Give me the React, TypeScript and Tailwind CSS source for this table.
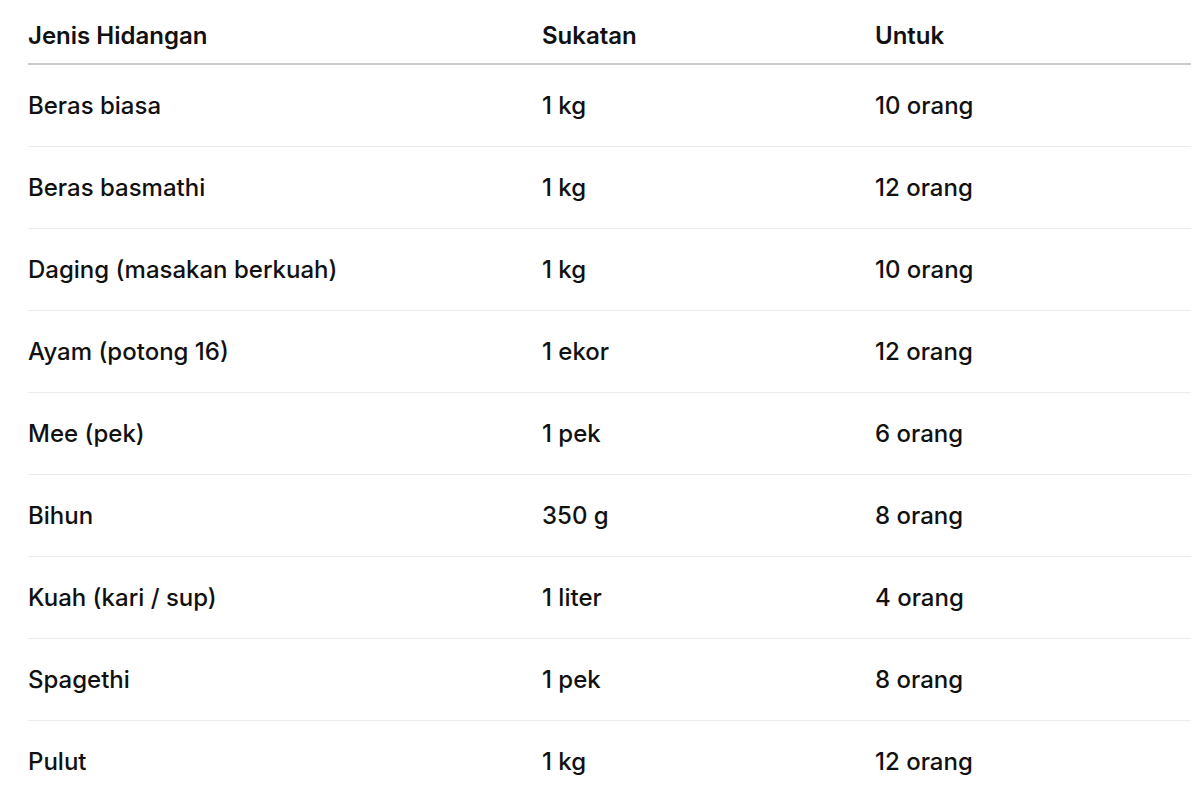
import React from 'react';

const rows: [string, string, string][] = [
  ['Beras biasa', '1 kg', '10 orang'],
  ['Beras basmathi', '1 kg', '12 orang'],
  ['Daging (masakan berkuah)', '1 kg', '10 orang'],
  ['Ayam (potong 16)', '1 ekor', '12 orang'],
  ['Mee (pek)', '1 pek', '6 orang'],
  ['Bihun', '350 g', '8 orang'],
  ['Kuah (kari / sup)', '1 liter', '4 orang'],
  ['Spagethi', '1 pek', '8 orang'],
  ['Pulut', '1 kg', '12 orang'],
];

const App: React.FC = () => {
  return (
    <div className="w-[1200px] h-[800px] bg-white overflow-hidden font-['Inter',sans-serif] text-[#111] text-[24px]">
      <div className="ml-[28px] w-[1163px]">
        <div className="grid grid-cols-[514px_333px_1fr] h-[65px] items-center border-b-2 border-[#cacaca] font-semibold pt-[8px]">
          <div>Jenis Hidangan</div>
          <div>Sukatan</div>
          <div>Untuk</div>
        </div>
        {rows.map(([name, qty, serves], i) => (
          <div
            key={name}
            className={`grid grid-cols-[514px_333px_1fr] h-[82px] items-center font-medium ${i < rows.length - 1 ? 'border-b border-[#ebebeb]' : ''}`}
          >
            <div>{name}</div>
            <div>{qty}</div>
            <div>{serves}</div>
          </div>
        ))}
      </div>
    </div>
  );
};

export default App;
